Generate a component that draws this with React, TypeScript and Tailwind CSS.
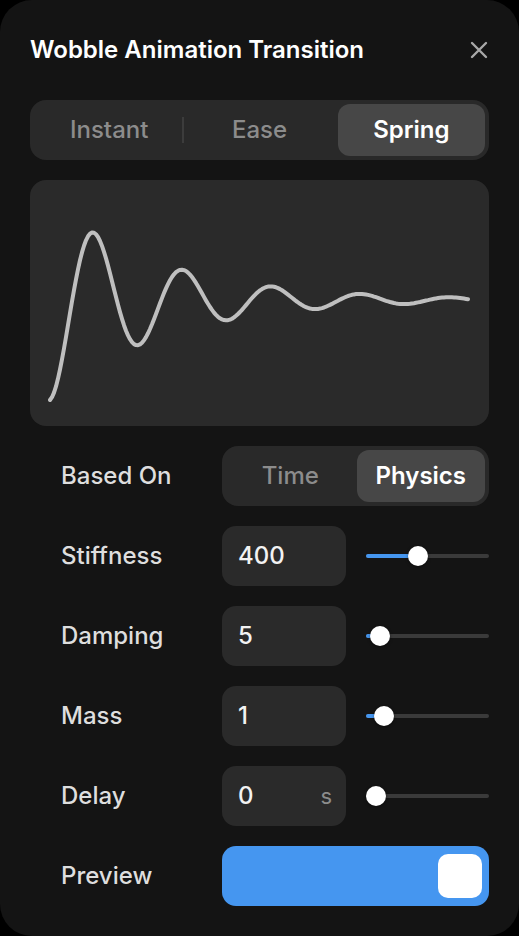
import { useState } from 'react';

const FONT = "font-['Inter','Noto_Sans',sans-serif]";

// damped spring curve, drawn in chart-local coordinates (459 x 246)
function springPath() {
  const pts: string[] = [];
  const half = 44.5;
  const k = -Math.log(0.67) / half;
  for (let s = 0; s <= 419; s += 2) {
    const d = -100 * Math.exp(-k * s) * Math.cos((Math.PI * s) / half);
    const x = 20 + s;
    const y = 120 - d;
    pts.push(`${pts.length ? 'L' : 'M'}${x.toFixed(1)} ${y.toFixed(1)}`);
  }
  return pts.join(' ');
}

const CURVE = springPath();

interface Param {
  label: string;
  value: string;
  unit?: string;
  pct: number;
}

const PARAMS: Param[] = [
  { label: 'Stiffness', value: '400', pct: 41 },
  { label: 'Damping', value: '5', pct: 4 },
  { label: 'Mass', value: '1', pct: 8 },
  { label: 'Delay', value: '0', unit: 's', pct: 0 },
];

function Slider({ pct }: { pct: number }) {
  // thumb travels between 10px and (width - 10px)
  const left = `calc(10px + (100% - 20px) * ${pct / 100})`;
  return (
    <div className="relative ml-5 h-[60px] flex-1">
      <div className="absolute left-0 right-0 top-[28px] h-[4px] rounded-full bg-[#3a3a3a]" />
      {pct > 0 && (
        <div
          className="absolute left-0 top-[28px] h-[4px] rounded-full bg-[#4596f0]"
          style={{ width: left }}
        />
      )}
      <div
        className="absolute top-[20px] h-5 w-5 -translate-x-1/2 rounded-full bg-white shadow-[0_1px_3px_rgba(0,0,0,0.5)]"
        style={{ left }}
      />
    </div>
  );
}

export default function App() {
  const [mode, setMode] = useState('Spring');
  const [basis, setBasis] = useState('Physics');
  const [preview, setPreview] = useState(true);

  const modes = ['Instant', 'Ease', 'Spring'];

  return (
    <div className={`min-h-screen bg-black ${FONT}`}>
      <div className="flex h-[936px] w-[519px] flex-col rounded-[32px] bg-[#141414] px-[30px] pt-[36px]">

        {/* Header */}
        <div className="flex h-[28px] items-center justify-between">
          <h1 className="text-[24px] font-semibold text-white">
            Wobble Animation Transition
          </h1>
          <button type="button" className="mr-[1px] text-[#a8a8a8]" aria-label="Close">
            <svg width="18" height="18" viewBox="0 0 18 18" fill="none" stroke="currentColor" strokeWidth={2.4} strokeLinecap="round">
              <path d="M2 2 16 16M16 2 2 16" />
            </svg>
          </button>
        </div>

        {/* Transition type */}
        <div className="mt-[36px] flex h-[60px] items-stretch rounded-[16px] bg-[#292929] p-[4px]">
          {modes.map((m, i) => {
            const active = mode === m;
            const showDivider = i === 0 && mode !== 'Instant' && mode !== 'Ease';
            return (
              <div key={m} className="relative flex flex-1 items-stretch">
                <button
                  type="button"
                  onClick={() => setMode(m)}
                  className={`flex-1 rounded-[12px] text-[24px] ${
                    active ? 'ml-[3px] bg-[#474747] font-semibold text-white' : 'font-medium text-[#8c8c8c]'
                  }`}
                >
                  {m}
                </button>
                {showDivider && (
                  <span className="absolute right-0 top-[13px] h-[26px] w-[2px] bg-[#3c3c3c]" />
                )}
              </div>
            );
          })}
        </div>

        {/* Curve preview */}
        <div className="mt-5 h-[246px] rounded-[16px] bg-[#2a2a2a]">
          <svg width="459" height="246" viewBox="0 0 459 246" fill="none">
            <path d={CURVE} stroke="#bfbfbf" strokeWidth={4} strokeLinecap="round" strokeLinejoin="round" />
          </svg>
        </div>

        {/* Params */}
        <div className="mt-5 flex flex-col gap-5">
          <div className="flex h-[60px] items-center">
            <span className="w-[192px] pl-[31px] text-[24px] font-medium text-[#dedede]">Based On</span>
            <div className="flex h-[60px] flex-1 rounded-[16px] bg-[#292929] p-[4px]">
              {['Time', 'Physics'].map((b) => (
                <button
                  key={b}
                  type="button"
                  onClick={() => setBasis(b)}
                  className={`flex-1 rounded-[12px] text-[24px] ${
                    basis === b ? 'ml-[2px] bg-[#474747] font-semibold text-white' : 'font-medium text-[#8c8c8c]'
                  }`}
                >
                  {b}
                </button>
              ))}
            </div>
          </div>

          {PARAMS.map((p) => (
            <div key={p.label} className="flex h-[60px] items-center">
              <span className="w-[192px] pl-[31px] text-[24px] font-medium text-[#dedede]">{p.label}</span>
              <div className="flex h-[60px] w-[124px] items-center justify-between rounded-[14px] bg-[#2a2a2a] pl-4 pr-[14px]">
                <span className="text-[24px] font-medium text-[#f2f2f2]">{p.value}</span>
                {p.unit && <span className="text-[22px] text-[#8c8c8c]">{p.unit}</span>}
              </div>
              <Slider pct={p.pct} />
            </div>
          ))}

          <div className="flex h-[60px] items-center">
            <span className="w-[192px] pl-[31px] text-[24px] font-medium text-[#dedede]">Preview</span>
            <button
              type="button"
              onClick={() => setPreview(!preview)}
              className={`flex h-[60px] flex-1 items-center rounded-[14px] pl-[8px] pr-[7px] ${
                preview ? 'justify-end bg-[#4596f0]' : 'justify-start bg-[#2a2a2a]'
              }`}
            >
              <span className="h-[44px] w-[44px] rounded-[10px] bg-white" />
            </button>
          </div>
        </div>

      </div>
    </div>
  );
}
